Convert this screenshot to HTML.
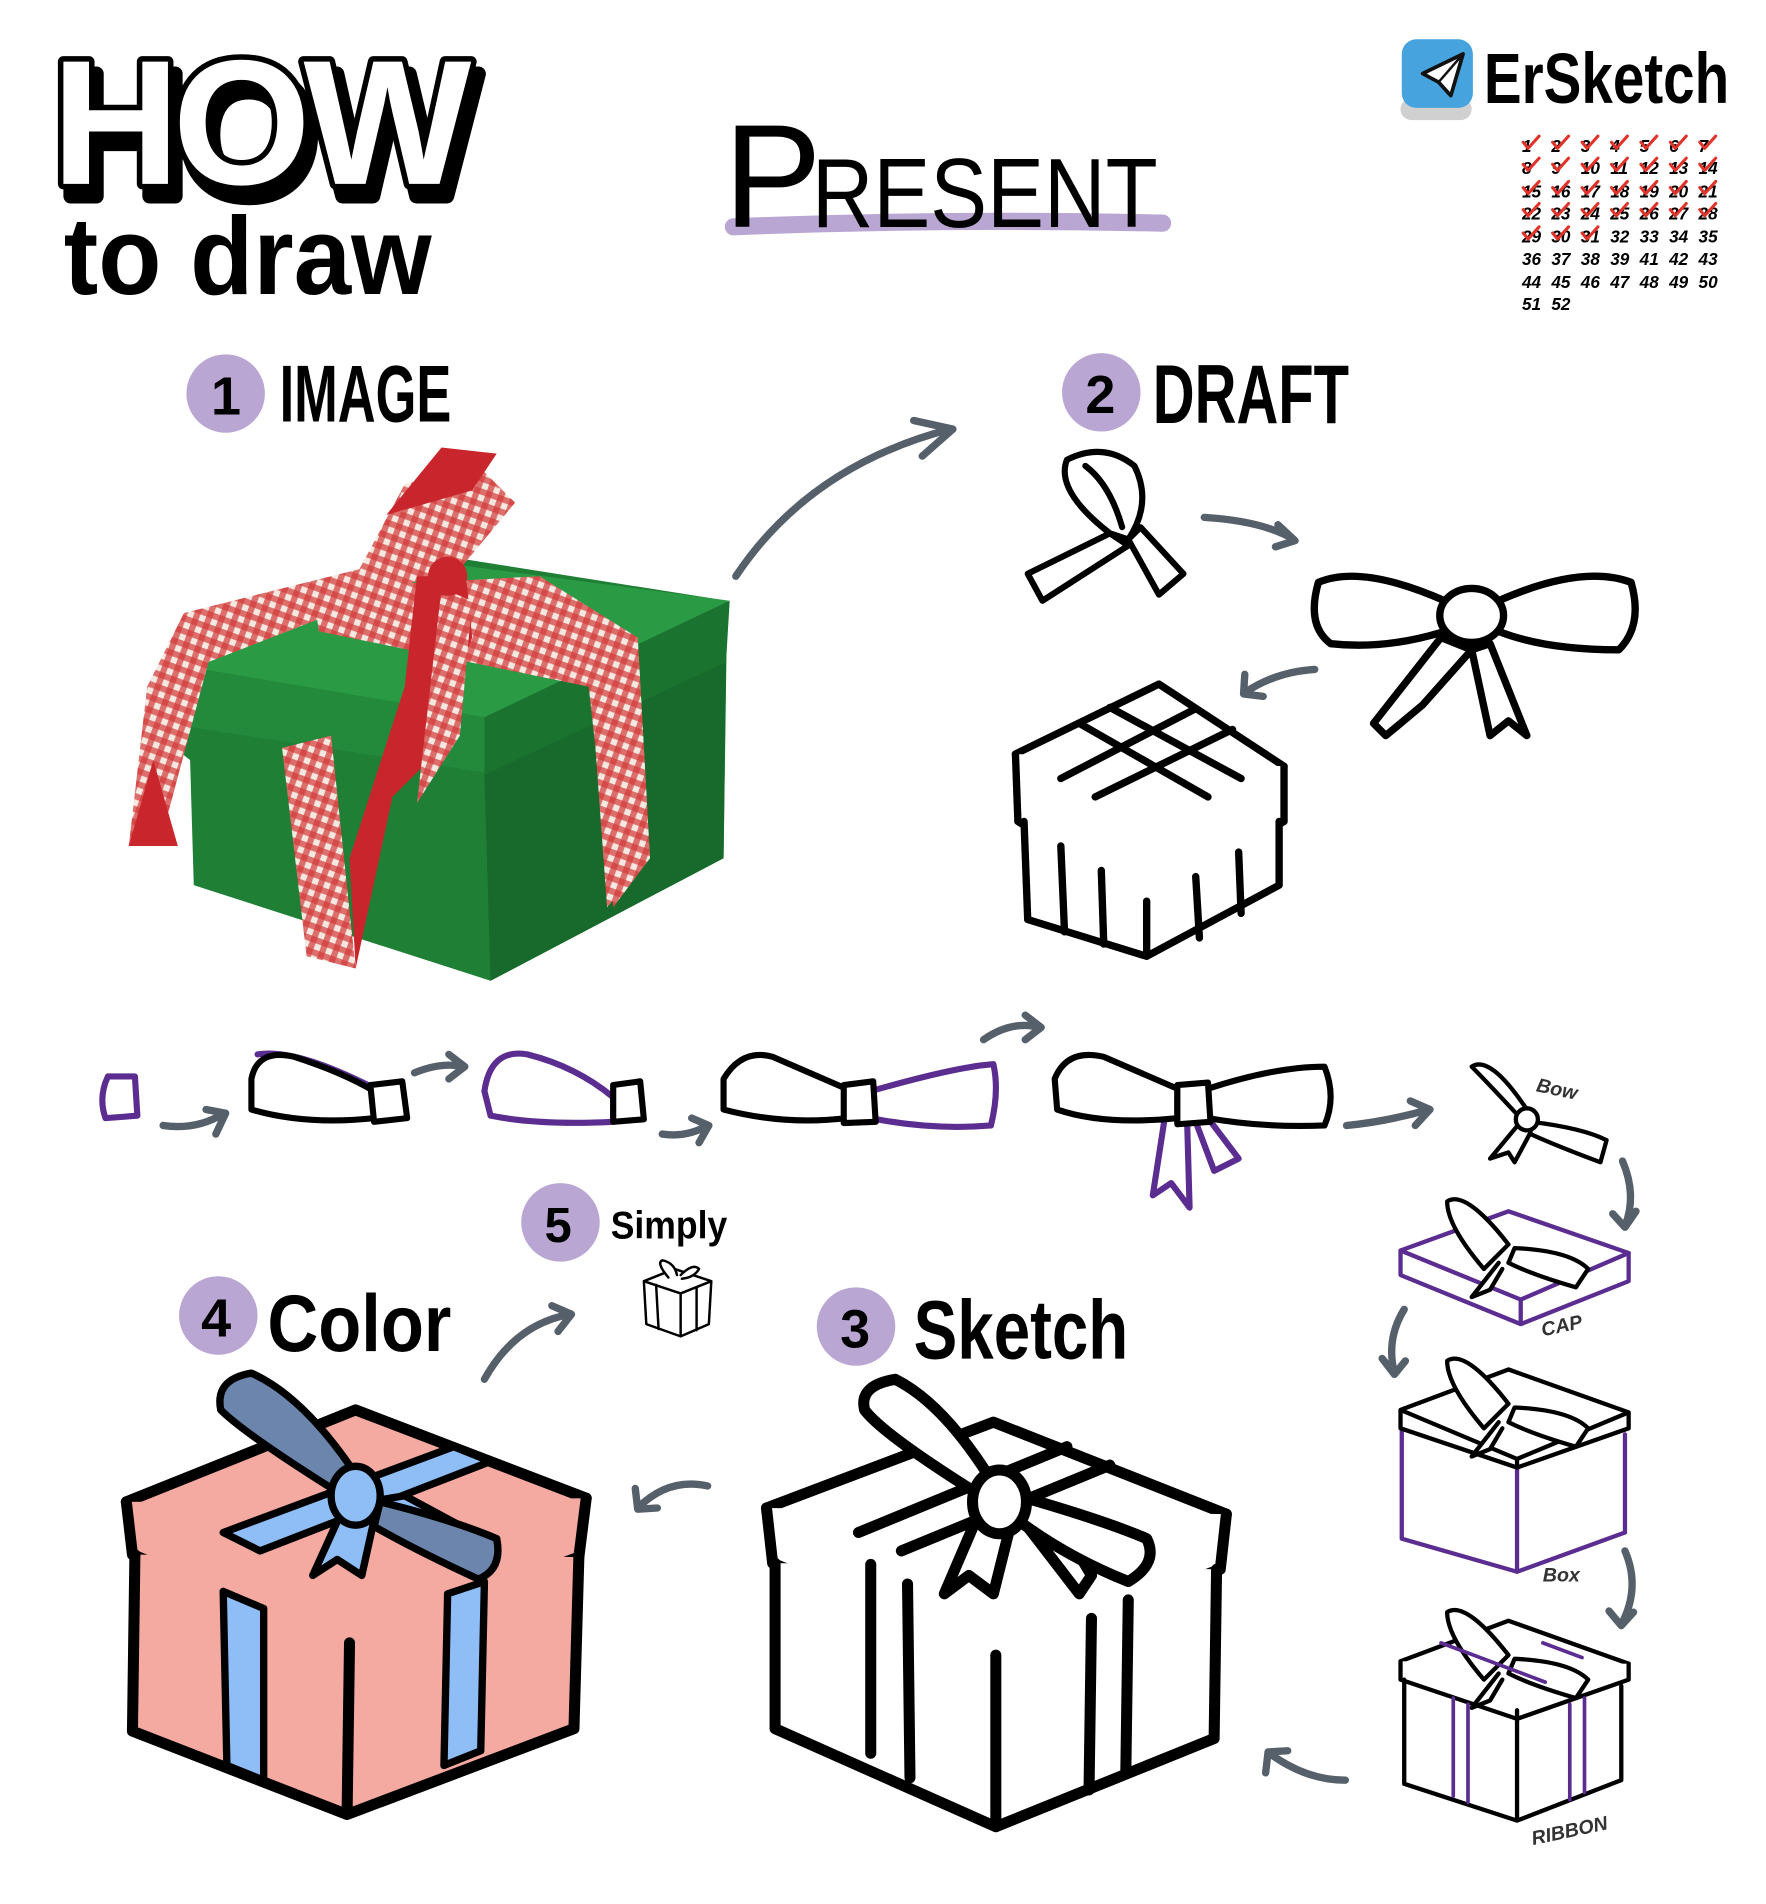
<!DOCTYPE html>
<html><head><meta charset="utf-8"><style>
html,body{margin:0;padding:0;background:#fff;}
svg{display:block;}
text{font-family:"Liberation Sans",sans-serif;}
</style></head><body>
<svg width="1766" height="1904" viewBox="0 0 1440 1553" preserveAspectRatio="none" xmlns="http://www.w3.org/2000/svg">
<defs>
<pattern id="ging" width="10" height="10" patternUnits="userSpaceOnUse" patternTransform="rotate(20)">
<rect width="10" height="10" fill="#f4e8e0"/>
<rect width="5" height="10" fill="#d23a3a" opacity="0.7"/>
<rect width="10" height="5" fill="#d23a3a" opacity="0.7"/>
</pattern>
</defs>
<g stroke-linecap="round" stroke-linejoin="round">

<!-- HOW -->
<text x="48" y="160" font-size="145" font-weight="bold" fill="#000" stroke="#000" stroke-width="12" letter-spacing="-6">HOW</text>
<text x="42" y="150" font-size="145" font-weight="bold" fill="#fff" stroke="#000" stroke-width="9" paint-order="stroke" letter-spacing="-6">HOW</text>
<text x="52" y="240" font-size="90" font-weight="bold" fill="#000" textLength="300" lengthAdjust="spacingAndGlyphs">to draw</text>

<!-- PRESENT -->
<path d="M598 185 Q770 178 948 182" stroke="#b9a6d3" stroke-width="14" fill="none"/>
<text x="590" y="185" font-size="120" fill="#000">P</text>
<text x="662" y="185" font-size="80" fill="#000" textLength="282" lengthAdjust="spacingAndGlyphs">RESENT</text>

<!-- Telegram logo -->
<rect x="1142" y="80" width="58" height="18" rx="9" fill="#d0d0d0"/>
<rect x="1143" y="32" width="58" height="56" rx="12" fill="#46a3de"/>
<path d="M1160 60 L1193 44 L1183 78 L1173 67 Z" fill="#fff" stroke="#111" stroke-width="3"/>
<path d="M1173 67 L1193 44" stroke="#111" stroke-width="2" fill="none"/>
<text x="1210" y="84" font-size="58" font-weight="bold" fill="#000" textLength="200" lengthAdjust="spacingAndGlyphs">ErSketch</text>

<!-- calendar -->
<g transform="translate(-10,0)">
<g font-size="14" fill="#000" font-style="italic" font-weight="bold">
<text x="1251" y="124">1</text><text x="1275" y="124">2</text><text x="1299" y="124">3</text><text x="1323" y="124">4</text><text x="1347" y="124">5</text><text x="1371" y="124">6</text><text x="1395" y="124">7</text>
<text x="1251" y="142">8</text><text x="1275" y="142">9</text><text x="1299" y="142">10</text><text x="1323" y="142">11</text><text x="1347" y="142">12</text><text x="1371" y="142">13</text><text x="1395" y="142">14</text>
<text x="1251" y="161">15</text><text x="1275" y="161">16</text><text x="1299" y="161">17</text><text x="1323" y="161">18</text><text x="1347" y="161">19</text><text x="1371" y="161">20</text><text x="1395" y="161">21</text>
<text x="1251" y="179">22</text><text x="1275" y="179">23</text><text x="1299" y="179">24</text><text x="1323" y="179">25</text><text x="1347" y="179">26</text><text x="1371" y="179">27</text><text x="1395" y="179">28</text>
<text x="1251" y="198">29</text><text x="1275" y="198">30</text><text x="1299" y="198">31</text><text x="1323" y="198">32</text><text x="1347" y="198">33</text><text x="1371" y="198">34</text><text x="1395" y="198">35</text>
<text x="1251" y="216">36</text><text x="1275" y="216">37</text><text x="1299" y="216">38</text><text x="1323" y="216">39</text><text x="1347" y="216">41</text><text x="1371" y="216">42</text><text x="1395" y="216">43</text>
<text x="1251" y="235">44</text><text x="1275" y="235">45</text><text x="1299" y="235">46</text><text x="1323" y="235">47</text><text x="1347" y="235">48</text><text x="1371" y="235">49</text><text x="1395" y="235">50</text>
<text x="1251" y="253">51</text><text x="1275" y="253">52</text>
</g>
<g stroke="#e0342a" stroke-width="2.5" fill="none">
<path d="M1252 116 l4 5 l9 -10 M1276 116 l4 5 l9 -10 M1300 116 l4 5 l9 -10 M1324 116 l4 5 l9 -10 M1348 116 l4 5 l9 -10 M1372 116 l4 5 l9 -10 M1396 116 l4 5 l9 -10"/>
<path d="M1252 134 l4 5 l9 -10 M1276 134 l4 5 l9 -10 M1300 134 l4 5 l9 -10 M1324 134 l4 5 l9 -10 M1348 134 l4 5 l9 -10 M1372 134 l4 5 l9 -10 M1396 134 l4 5 l9 -10"/>
<path d="M1252 153 l4 5 l9 -10 M1276 153 l4 5 l9 -10 M1300 153 l4 5 l9 -10 M1324 153 l4 5 l9 -10 M1348 153 l4 5 l9 -10 M1372 153 l4 5 l9 -10 M1396 153 l4 5 l9 -10"/>
<path d="M1252 171 l4 5 l9 -10 M1276 171 l4 5 l9 -10 M1300 171 l4 5 l9 -10 M1324 171 l4 5 l9 -10 M1348 171 l4 5 l9 -10 M1372 171 l4 5 l9 -10 M1396 171 l4 5 l9 -10"/>
<path d="M1252 190 l4 5 l9 -10 M1276 190 l4 5 l9 -10 M1300 190 l4 5 l9 -10"/>
</g>
</g>

<!-- step circles -->
<g fill="#b9a6d3">
<circle cx="184" cy="321" r="32"/><circle cx="898" cy="320" r="32"/>
<circle cx="698" cy="1082" r="32"/><circle cx="178" cy="1073" r="32"/><circle cx="457" cy="997" r="32"/>
</g>
<g font-weight="bold" fill="#000">
<text x="172" y="338" font-size="44">1</text>
<text x="885" y="337" font-size="44">2</text>
<text x="685" y="1099" font-size="44">3</text>
<text x="164" y="1090" font-size="44">4</text>
<text x="444" y="1013" font-size="40">5</text>
<text x="228" y="344" font-size="66" textLength="140" lengthAdjust="spacingAndGlyphs">IMAGE</text>
<text x="940" y="345" font-size="68" textLength="160" lengthAdjust="spacingAndGlyphs">DRAFT</text>
<text x="745" y="1108" font-size="68" textLength="175" lengthAdjust="spacingAndGlyphs">Sketch</text>
<text x="218" y="1102" font-size="66" textLength="150" lengthAdjust="spacingAndGlyphs">Color</text>
<text x="498" y="1010" font-size="32" textLength="95" lengthAdjust="spacingAndGlyphs">Simply</text>
</g>

<!-- Photo gift -->
<g>
<path d="M130 540 L130 600 L155 620 L158 722 L400 800 L590 700 L593 490 L340 450 Z" fill="#1f7f35"/>
<path d="M130 540 L330 455 L595 490 L395 585 Z" fill="#2a9a44"/>
<path d="M130 540 L395 585 L395 630 L135 590 Z" fill="#23893b"/>
<path d="M395 585 L595 490 L592 540 L395 632 Z" fill="#1a7430"/>
<path d="M395 632 L592 540 L590 700 L400 800 Z" fill="#176a2b"/>
<path d="M255 480 L440 470 L520 520 L530 700 L500 740 L480 560 L260 515 Z" fill="url(#ging)"/>
<path d="M230 610 L270 600 L290 790 L250 780 Z" fill="url(#ging)"/>
<path d="M480 535 L520 520 L530 700 L495 740 Z" fill="url(#ging)"/>
<path d="M120 560 L150 500 L330 455 L350 470 L170 540 L130 690 L105 690 Z" fill="url(#ging)"/>
<path d="M290 470 L330 395 L390 380 L420 410 L370 470 Z" fill="url(#ging)"/>
<path d="M315 420 L360 365 L405 370 L385 400 Z" fill="#c8262c"/>
<path d="M340 470 L380 470 L385 520 L350 620 L320 650 L290 790 L285 700 L330 560 Z" fill="#c8262c"/>
<path d="M360 480 L385 490 L375 600 L340 655 Z" fill="url(#ging)"/>
<path d="M105 690 L125 620 L145 690 Z" fill="#c8262c"/>
<circle cx="365" cy="470" r="16" fill="#c8262c"/>
</g>

<!-- arrows (grey) -->
<g stroke="#56606a" stroke-width="6" fill="none">
<path d="M600 470 Q660 380 775 350 M745 343 L777 350 L752 372"/>
<path d="M133 918 Q160 922 183 908 M168 905 L184 908 L176 925"/>
<path d="M338 875 Q360 866 378 870 M366 860 L379 870 L366 880"/>
<path d="M540 925 Q560 928 577 918 M564 912 L578 918 L570 932"/>
<path d="M802 848 Q825 832 848 838 M836 828 L849 838 L836 848"/>
<path d="M1098 918 Q1130 915 1165 905 M1150 898 L1166 905 L1154 918"/>
<path d="M1323 947 Q1335 975 1325 1000 M1315 990 L1325 1001 L1334 988"/>
<path d="M1145 1068 Q1130 1092 1137 1120 M1127 1108 L1137 1121 L1146 1110"/>
<path d="M1325 1265 Q1338 1295 1322 1325 M1312 1314 L1322 1326 L1332 1315"/>
<path d="M1097 1452 Q1065 1452 1035 1430 M1032 1446 L1034 1429 L1050 1428"/>
<path d="M395 1125 Q420 1080 465 1072 M450 1065 L466 1072 L455 1086"/>
<path d="M577 1212 Q545 1205 520 1230 M518 1214 L520 1231 L536 1230"/>
<path d="M982 422 Q1030 425 1055 440 M1042 428 L1056 441 L1040 446"/>
<path d="M1072 546 Q1040 548 1015 565 M1015 550 L1014 566 L1030 568"/>
</g>

<!-- draft bow small -->
<g stroke="#000" stroke-width="5" fill="#fff">
<path d="M905 435 L838 468 L850 490 L920 445 Z"/>
<path d="M920 440 L945 485 L965 468 L930 430 Z"/>
<path d="M905 435 Q860 400 870 375 Q900 360 925 380 Q940 410 920 440 Z"/>
<path d="M885 380 Q905 395 915 430"/>
</g>
<!-- draft bow large -->
<g stroke="#000" stroke-width="6" fill="#fff">
<path d="M1175 520 L1120 590 L1130 600 L1160 575 L1200 530 Z"/>
<path d="M1200 530 L1215 600 L1230 588 L1245 600 L1215 525 Z"/>
<path d="M1178 490 Q1110 460 1075 475 Q1065 510 1085 525 Q1130 530 1178 515 Z"/>
<path d="M1222 490 Q1290 460 1330 475 Q1340 510 1320 530 Q1260 530 1222 515 Z"/>
<ellipse cx="1200" cy="502" rx="26" ry="22"/>
</g>
<!-- draft box -->
<g stroke="#000" stroke-width="6" fill="#fff">
<path d="M828 615 L945 558 L1047 625 L935 680 Z"/>
<path d="M828 615 L830 670 L935 735 L1047 670 L1047 625"/>
<path d="M935 680 L935 735"/>
<path d="M835 670 L838 750 L935 780 L1043 722 L1043 670"/>
<path d="M935 735 L935 780"/>
<path d="M865 635 L975 578 M893 650 L1005 595 M880 590 L985 650 M905 577 L1012 635" fill="none"/>
<path d="M865 690 L868 760 M898 710 L900 770 M975 715 L978 765 M1010 695 L1012 745" fill="none"/>
</g>

<!-- middle row bows -->
<g stroke="#5b2d91" stroke-width="5" fill="#fff">
<path d="M88 878 L110 878 L112 910 L86 912 Q80 895 88 878 Z"/>
<path d="M210 860 Q240 855 300 885" fill="none"/>
<path d="M395 890 Q400 855 430 860 Q470 870 500 895 L500 915 Q440 918 400 910 Z"/>
<path d="M710 890 Q780 870 810 868 Q815 890 808 918 Q760 922 710 912 Z"/>
<path d="M950 910 L940 975 L955 965 L970 985 L968 915 Z"/>
<path d="M975 915 L990 955 L1010 945 L985 912 Z"/>
</g>
<g stroke="#000" stroke-width="5" fill="#fff">
<path d="M205 880 Q210 855 240 862 Q280 875 305 890 L305 912 Q250 918 205 905 Z"/>
<path d="M302 885 L328 882 L332 912 L305 915 Z"/>
<path d="M500 885 L522 882 L525 913 L500 915 Z"/>
<path d="M590 880 Q605 855 630 862 Q660 875 690 888 L690 912 Q640 918 590 905 Z"/>
<path d="M688 885 L712 882 L714 915 L688 916 Z"/>
<path d="M860 880 Q870 855 900 862 Q930 875 960 888 L960 912 Q900 918 862 905 Z"/>
<path d="M985 888 Q1040 870 1080 870 Q1090 895 1080 918 Q1030 920 985 912 Z"/>
<path d="M960 885 L985 883 L987 915 L960 917 Z"/>
</g>

<!-- right column small steps -->
<g stroke="#000" stroke-width="3.5" fill="#fff">
<path d="M1240 915 L1215 945 L1230 940 L1235 948 L1250 920 Z"/>
<path d="M1238 910 Q1210 880 1200 870 Q1215 860 1245 905 Z"/>
<path d="M1248 915 Q1290 920 1310 930 L1305 948 Q1270 935 1248 925 Z"/>
<circle cx="1245" cy="913" r="9"/>
</g>
<text x="1252" y="890" font-size="16" font-weight="bold" font-style="italic" fill="#333" transform="rotate(12 1252 890)">Bow</text>
<g stroke-width="3.5">
<path d="M1142 1020 L1230 988 L1328 1022 L1240 1060 Z" fill="#fff" stroke="#5b2d91"/>
<path d="M1142 1020 L1142 1040 L1240 1080 L1328 1045 L1328 1022 M1240 1060 L1240 1080" fill="none" stroke="#5b2d91"/>
<path d="M1210 1035 Q1180 1000 1180 980 Q1195 970 1230 1015 Z M1235 1018 Q1280 1020 1295 1035 L1285 1050 Q1250 1040 1230 1030 Z M1222 1030 L1200 1058 L1215 1052 L1225 1035" fill="#fff" stroke="#000"/>
</g>
<text x="1258" y="1090" font-size="16" font-weight="bold" font-style="italic" fill="#333" transform="rotate(-12 1258 1090)">CAP</text>
<g stroke-width="3.5" fill="#fff">
<path d="M1143 1160 L1143 1255 L1237 1282 L1325 1250 L1325 1170" stroke="#5b2d91"/>
<path d="M1237 1195 L1237 1282" stroke="#5b2d91" fill="none"/>
<path d="M1142 1150 L1230 1117 L1328 1152 L1237 1190 Z M1142 1150 L1142 1165 L1237 1197 L1328 1165 L1328 1152 M1237 1190 L1237 1197" stroke="#000"/>
<path d="M1210 1165 Q1180 1130 1180 1110 Q1195 1100 1230 1145 Z M1235 1148 Q1280 1150 1295 1165 L1285 1180 Q1250 1170 1230 1160 Z M1222 1160 L1200 1188 L1215 1182 L1225 1165" stroke="#000"/>
</g>
<text x="1258" y="1290" font-size="16" font-weight="bold" font-style="italic" fill="#333">Box</text>
<g stroke-width="3.5" fill="#fff" stroke="#000">
<path d="M1142 1355 L1230 1322 L1328 1357 L1237 1395 Z"/>
<path d="M1142 1355 L1142 1370 L1237 1402 L1328 1370 L1328 1357 M1237 1395 L1237 1402"/>
<path d="M1145 1370 L1145 1455 L1237 1485 L1322 1452 L1322 1375 M1237 1402 L1237 1485" fill="none"/>
<path d="M1210 1370 Q1180 1335 1180 1315 Q1195 1305 1230 1350 Z M1235 1353 Q1280 1355 1295 1370 L1285 1385 Q1250 1375 1230 1365 Z M1222 1365 L1200 1393 L1215 1387 L1225 1370"/>
</g>
<g stroke="#5b2d91" stroke-width="3" fill="none">
<path d="M1185 1385 L1185 1465 M1197 1390 L1197 1470 M1280 1390 L1280 1468 M1292 1385 L1292 1462 M1175 1340 L1260 1372 M1258 1340 L1290 1352"/>
</g>
<text x="1250" y="1505" font-size="16" font-weight="bold" font-style="italic" fill="#333" transform="rotate(-12 1250 1505)">RIBBON</text>

<g stroke="#000" stroke-width="2" fill="#fff">
<path d="M525 1045 L550 1035 L580 1045 L555 1055 Z M525 1045 L527 1080 L555 1090 L578 1080 L580 1045 M555 1055 L555 1090 M535 1048 L537 1084 M568 1050 L568 1085"/>
<path d="M545 1042 Q535 1030 540 1028 Q550 1030 552 1040 M555 1040 Q565 1030 570 1035 Q566 1042 556 1043"/>
</g>

<!-- Sketch box -->
<g stroke="#000" stroke-width="9" fill="#fff">
<path d="M625 1230 L810 1160 L1000 1235 L812 1310 Z"/>
<path d="M625 1230 L630 1275 L812 1350 L995 1280 L1000 1235 M812 1310 L812 1350"/>
<path d="M632 1275 L632 1410 L812 1490 L990 1418 L992 1280 M812 1350 L812 1490"/>
<path d="M710 1276 L710 1430 M740 1292 L742 1450 M890 1320 L888 1460 M920 1305 L918 1445" fill="none"/>
<path d="M700 1250 L870 1180 M735 1265 L905 1195" fill="none"/>
<path d="M800 1230 L770 1300 L790 1285 L810 1300 L825 1240 Z"/>
<path d="M830 1235 L880 1300 L890 1285 L860 1235 Z"/>
<path d="M800 1220 Q720 1170 705 1150 Q700 1130 730 1125 Q770 1145 810 1210 Z"/>
<path d="M830 1220 Q900 1240 935 1255 Q945 1275 920 1290 Q870 1270 830 1240 Z"/>
<ellipse cx="815" cy="1225" rx="22" ry="26"/>
</g>

<!-- Color box -->
<g stroke="#000" stroke-width="9" fill="#f4aaa0">
<path d="M103 1225 L290 1150 L478 1222 L285 1298 Z"/>
<path d="M103 1225 L108 1268 L285 1340 L472 1270 L478 1222 M285 1298 L285 1340"/>
<path d="M110 1268 L108 1412 L283 1480 L468 1410 L472 1270 M285 1340 L283 1480"/>
</g>
<g stroke="#000" stroke-width="6" fill="#8fbdf5">
<path d="M182 1298 L185 1440 L215 1452 L215 1312 Z"/>
<path d="M365 1300 L362 1440 L392 1428 L395 1290 Z"/>
<path d="M182 1250 L370 1180 L400 1192 L212 1265 Z"/>
<path d="M280 1230 L255 1285 L275 1272 L295 1285 L305 1240 Z"/>
<path d="M300 1225 L380 1270 L395 1255 L330 1220 Z"/>
<path d="M280 1220 Q200 1170 180 1150 Q175 1125 205 1120 Q250 1140 295 1210 Z" fill="#6b85ad"/>
<path d="M310 1225 Q370 1240 405 1255 Q410 1280 390 1288 Q340 1265 305 1245 Z" fill="#6b85ad"/>
<ellipse cx="290" cy="1220" rx="20" ry="24"/>
</g>
</g>
</svg>
</body></html>
